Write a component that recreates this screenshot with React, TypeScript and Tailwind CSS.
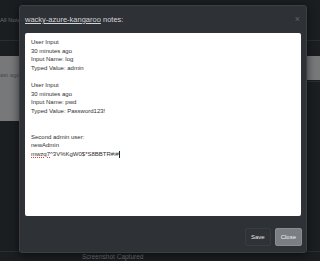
import React from "react";

const lines = [
  "User Input",
  "30 minutes ago",
  "Input Name: log",
  "Typed Value: admin",
  "",
  "User Input",
  "30 minutes ago",
  "Input Name: pwd",
  "Typed Value: Password123!",
  "",
  "",
  "Second admin user:",
  "newAdmin",
];

export default function App() {
  return (
    <div
      className="relative w-[320px] h-[261px] overflow-hidden bg-[#1b1e21]"
      style={{ fontFamily: '"Liberation Sans", Arial, sans-serif' }}
    >
      {/* background page (dimmed by backdrop) */}
      <div className="flex flex-col h-full">
        <div className="h-[41px] border-b border-[#2b2e31] flex items-center">
          <span className="text-[6px] text-[#6a6d70]">All Notes</span>
        </div>
        <div className="flex justify-between mt-[15px]">
          <div className="w-[40px] h-[65px] bg-[#77787a] flex items-start pt-[15px]">
            <span className="text-[6px] text-[#4a4b4d]">ast ago</span>
          </div>
          <div className="flex flex-col w-[13px]">
            <div className="h-[24px] bg-[#77787a]" />
            <div className="h-[2px] border-b border-[#2b2e31]" />
          </div>
        </div>
        <div className="mt-auto h-[10px] border-t border-[#2b2e31] flex items-center pl-[82px]">
          <span className="text-[6.5px] text-[#6f7275]">Screenshot Captured</span>
        </div>
      </div>

      {/* modal */}
      <div className="absolute left-[19px] top-[5px] w-[288px] h-[248px] bg-[#2e3136] border border-[#3b3e43] rounded-[3px] flex flex-col shadow-[0_2px_8px_rgba(0,0,0,0.6)]">
        <div className="h-[27px] flex items-center justify-between pl-[5px] pr-[6px]">
          <span className="text-[7.5px] text-[#d2d4d7]">
            <span className="underline">wacky-azure-kangaroo</span> notes:
          </span>
          <span className="text-[9px] text-[#5f6267] leading-none">×</span>
        </div>
        <div className="px-[5px]">
          <div className="h-[183px] bg-white rounded-[2px] pt-[5px] pl-[6px] text-[6px] leading-[8.6px] text-[#2f2f2f]">
            {lines.map((l, i) => (
              <div key={i} className="h-[8.6px] whitespace-pre">
                {l}
              </div>
            ))}
            <div className="h-[8.6px] whitespace-pre flex items-center">
              <span className="underline decoration-dotted decoration-[#e0393e]">mwzq7</span>
              <span>^3V%KgW0$*S8BBTR#i#</span>
              <span className="inline-block w-[0.5px] h-[7px] bg-[#222]" />
            </div>
          </div>
        </div>
        <div className="flex-1 flex items-center justify-end gap-[4px] pr-[4px] pt-[6px]">
          <button className="h-[18px] px-[5px] text-[6px] text-[#e6e6e6] bg-[#2f3237] border border-[#393c41] rounded-[2px]">
            Save
          </button>
          <button className="h-[18px] px-[5px] text-[6px] text-[#f0f0f0] bg-[#7b7e83] border border-[#8a8d91] rounded-[2px]">
            Close
          </button>
        </div>
      </div>
    </div>
  );
}
